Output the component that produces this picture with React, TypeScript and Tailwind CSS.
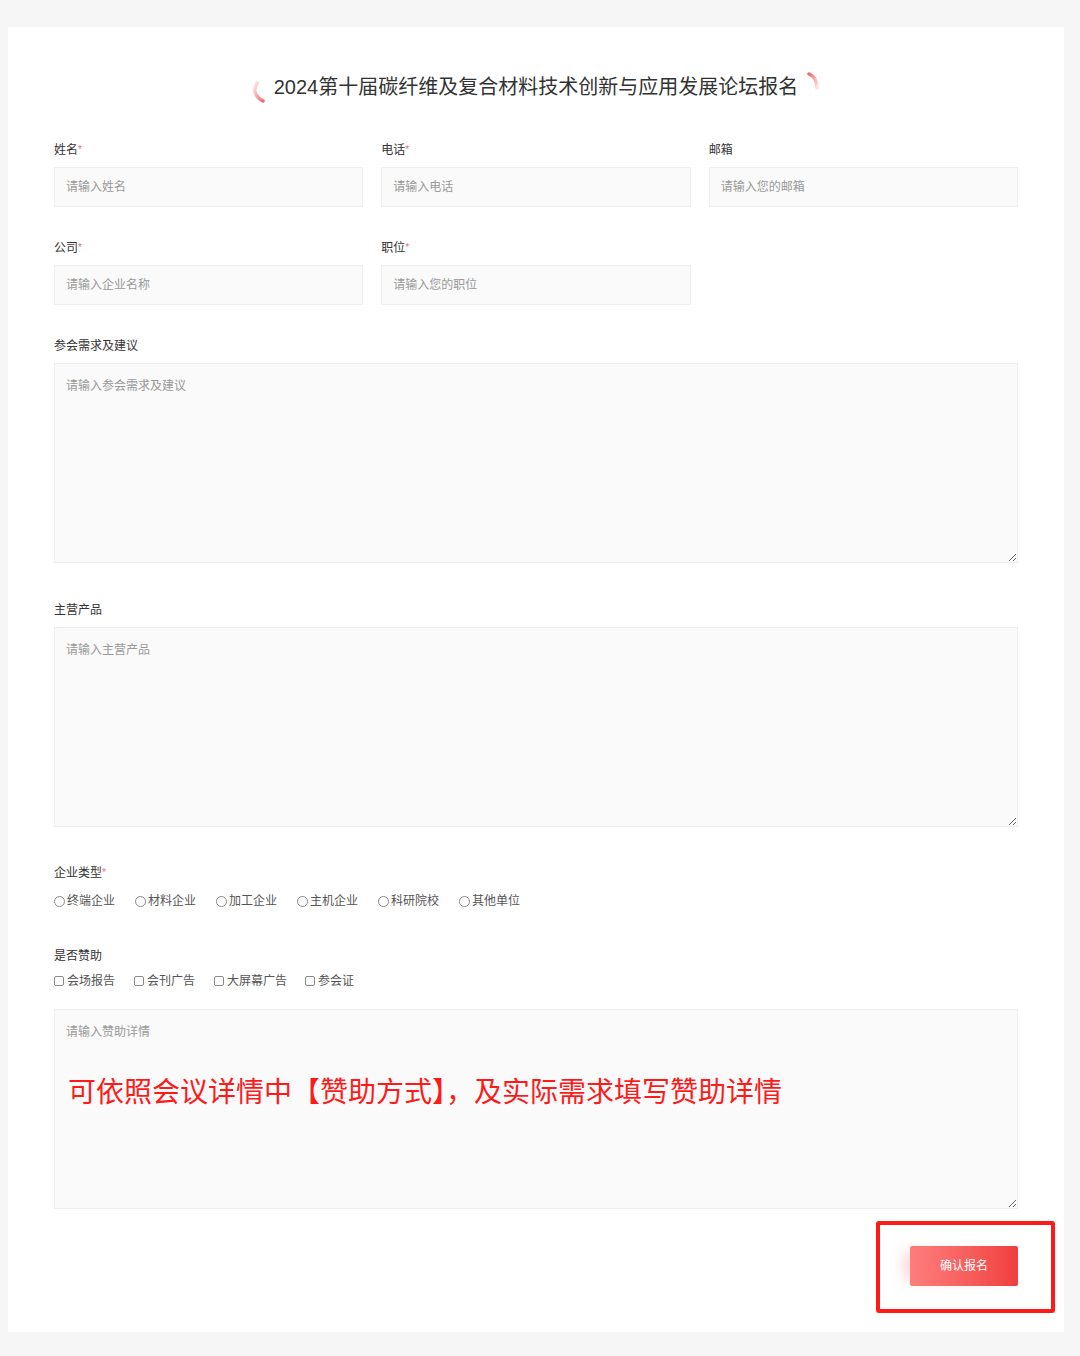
import React from 'react'

const font = { fontFamily: '"Liberation Sans", "Noto Sans CJK SC", sans-serif' }

function Label({ text, required }: { text: string; required?: boolean }) {
  return (
    <div className="h-[18px] leading-[20px] text-[12px] text-[#333] mb-[9px]">
      {text}
      {required && <span className="text-[#f56c6c] text-[10px] align-top">*</span>}
    </div>
  )
}

function Field({ label, placeholder, required }: { label: string; placeholder: string; required?: boolean }) {
  return (
    <div>
      <Label text={label} required={required} />
      <input
        placeholder={placeholder}
        className="w-full h-10 bg-[#fafafa] border border-[#eeeeee] pl-[11px] pr-3 text-[12px] text-[#333] placeholder:text-[#999] outline-none"
        style={font}
      />
    </div>
  )
}

function Area({ placeholder, children }: { placeholder: string; children?: React.ReactNode }) {
  return (
    <div className="relative h-[200px]">
      <textarea
        placeholder={placeholder}
        className="block w-full h-full bg-[#fafafa] border border-[#eeeeee] pl-[11px] pr-3 py-[13px] text-[12px] text-[#333] placeholder:text-[#999] outline-none resize"
        style={font}
      />
      {children}
    </div>
  )
}

function Radio({ text }: { text: string }) {
  return (
    <label className="flex items-center gap-[2px] text-[12px] text-[#555]">
      <span className="w-[11px] h-[11px] rounded-full border border-[#8a8a8a] bg-white" />
      {text}
    </label>
  )
}

function Check({ text }: { text: string }) {
  return (
    <label className="flex items-center gap-[3px] text-[12px] text-[#555]">
      <span className="w-[10px] h-[10px] rounded-[2px] border border-[#8a8a8a] bg-white" />
      {text}
    </label>
  )
}

export default function App() {
  return (
    <div className="min-h-[1356px] bg-[#f6f6f6] pt-[27px] px-2" style={font}>
      <div className="relative bg-white w-[1056px] pt-[46px] pb-[46px] px-[46px]">
        <div className="flex justify-center items-center h-7">
          <div className="relative">
            <svg className="absolute -left-[22px] top-[8px]" width="14" height="22" viewBox="0 0 14 22">
              <defs>
                <linearGradient id="lg1" x1="0" y1="0" x2="1" y2="1">
                  <stop offset="0" stopColor="#ffe4e4" />
                  <stop offset="1" stopColor="#f06a6a" />
                </linearGradient>
              </defs>
              <path d="M5 2 C1 8 2 15 11 20" stroke="url(#lg1)" strokeWidth="3.5" fill="none" strokeLinecap="round" />
            </svg>
            <h1 className="text-[20px] leading-7 text-[#333]">2024第十届碳纤维及复合材料技术创新与应用发展论坛报名</h1>
            <svg className="absolute -right-[22px] -top-[1px]" width="14" height="20" viewBox="0 0 14 20">
              <defs>
                <linearGradient id="lg2" x1="0" y1="0" x2="1" y2="1">
                  <stop offset="0" stopColor="#f06a6a" />
                  <stop offset="1" stopColor="#ffe4e4" />
                </linearGradient>
              </defs>
              <path d="M3 2 C8 4 11 9 11 16" stroke="url(#lg2)" strokeWidth="3.5" fill="none" strokeLinecap="round" />
            </svg>
          </div>
        </div>

        <div className="mt-[39px] grid grid-cols-3 gap-x-[18px] gap-y-[31px]">
          <Field label="姓名" required placeholder="请输入姓名" />
          <Field label="电话" required placeholder="请输入电话" />
          <Field label="邮箱" placeholder="请输入您的邮箱" />
          <Field label="公司" required placeholder="请输入企业名称" />
          <Field label="职位" required placeholder="请输入您的职位" />
        </div>

        <div className="mt-[31px]">
          <Label text="参会需求及建议" />
          <Area placeholder="请输入参会需求及建议" />
        </div>

        <div className="mt-[37px]">
          <Label text="主营产品" />
          <Area placeholder="请输入主营产品" />
        </div>

        <div className="mt-[36px]">
          <Label text="企业类型" required />
          <div className="flex h-4 items-center mt-[12px]">
            <div className="w-[81px]"><Radio text="终端企业" /></div>
            <div className="w-[81px]"><Radio text="材料企业" /></div>
            <div className="w-[81px]"><Radio text="加工企业" /></div>
            <div className="w-[81px]"><Radio text="主机企业" /></div>
            <div className="w-[81px]"><Radio text="科研院校" /></div>
            <div><Radio text="其他单位" /></div>
          </div>
        </div>

        <div className="mt-[37px]">
          <Label text="是否赞助" />
          <div className="flex h-4 items-center mt-[9px]">
            <div className="w-[80px]"><Check text="会场报告" /></div>
            <div className="w-[80px]"><Check text="会刊广告" /></div>
            <div className="w-[91px]"><Check text="大屏幕广告" /></div>
            <div><Check text="参会证" /></div>
          </div>
        </div>

        <div className="mt-[20px]">
          <Area placeholder="请输入赞助详情">
            <p className="absolute left-[14px] top-[67px] text-[28px] leading-[34px] text-[#ff1a1a] pointer-events-none whitespace-nowrap">
              可依照会议详情中【赞助方式】，及实际需求填写赞助详情
            </p>
          </Area>
        </div>

        <div className="flex justify-end mt-[37px]">
          <button className="w-[108px] h-10 rounded-[2px] text-white text-[12px] bg-gradient-to-r from-[#ff7d7d] to-[#ef3e3e] shadow-[-12px_0_14px_-6px_rgba(240,90,90,0.25)]">
            确认报名
          </button>
        </div>

        <div className="absolute left-[868px] top-[1194px] w-[179px] h-[92px] border-[4px] border-[#ff1a1a] rounded-[3px] pointer-events-none" />
      </div>
    </div>
  )
}
